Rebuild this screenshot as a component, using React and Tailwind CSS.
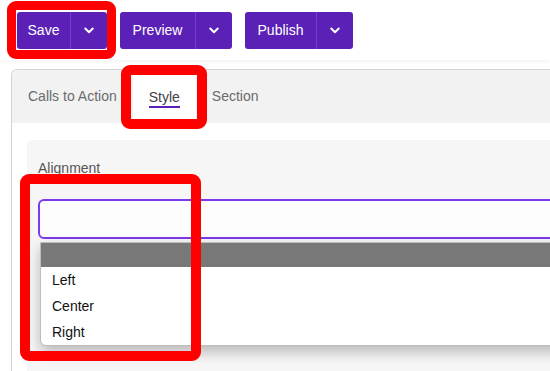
import React from 'react';

const Chevron = () => (
  <svg width="18" height="18" viewBox="0 0 24 24" fill="none" stroke="currentColor" strokeWidth="2.6" strokeLinecap="round" strokeLinejoin="round">
    <path d="M7 10l5 5 5-5" />
  </svg>
);

const SplitButton = ({ label, mainW }) => (
  <div className="flex h-[37px] rounded-[3px] bg-[#5b21b6] text-white overflow-hidden">
    <div className={`${mainW} flex items-center justify-center text-[14px]`}>{label}</div>
    <div className="w-[37px] flex items-center justify-center border-l border-[#7040d0]">
      <Chevron />
    </div>
  </div>
);

export default function App() {
  return (
    <div className="relative w-[550px] h-[371px] overflow-hidden bg-white" style={{ fontFamily: '"Liberation Sans", Arial, sans-serif' }}>
      {/* toolbar */}
      <div className="h-[60px] flex items-center pl-[17px] gap-[13px] shadow-[0_2px_4px_rgba(0,0,0,0.05)]">
        <SplitButton label="Save" mainW="w-[53px]" />
        <SplitButton label="Preview" mainW="w-[75px]" />
        <SplitButton label="Publish" mainW="w-[71px]" />
      </div>

      {/* panel */}
      <div className="ml-[11px] mt-[9px] border-l border-t border-[#d4d4d8] rounded-tl-md h-[400px]">
        <div className="flex h-[53px] bg-[#f2f2f2] rounded-tl-md text-[14px] text-[#6b6b6b]">
          <div className="px-4 flex items-center">Calls to Action</div>
          <div className="px-4 flex items-center bg-white text-[#3f3f46]">
            <span className="border-b-2 border-[#5b21b6] leading-[18px] pt-[2px]">Style</span>
          </div>
          <div className="px-4 flex items-center">Section</div>
        </div>

        <div className="pt-[17px] pl-[15px]">
          <div className="bg-[#f6f6f6] rounded-tl-md pl-[11px] pt-[19px] h-[300px]">
            <div className="text-[14px] text-[#555] leading-[18px]">Alignment</div>
            <div className="mt-[22px] h-[40px] border-2 border-[#7c3aed] rounded-md bg-[#fdfdfd] -mr-2"></div>
          </div>
        </div>
      </div>

      {/* dropdown list */}
      <div className="absolute left-[40px] top-[242px] w-[530px] h-[104px] bg-white border border-[#bdbdbd] rounded-b-md shadow-[0_6px_14px_rgba(0,0,0,0.25)] text-[14px] text-[#111]">
        <div className="h-[24px] bg-[#787878]"></div>
        <div className="pl-[11px] h-[26px] flex items-center pt-[1px]">Left</div>
        <div className="pl-[11px] h-[26px] flex items-center pt-[1px]">Center</div>
        <div className="pl-[11px] h-[26px] flex items-center pt-[1px]">Right</div>
      </div>

      {/* highlight boxes */}
      <div className="absolute left-[7px] top-[1px] w-[109px] h-[58px] border-[9px] border-[#ff0000] rounded-[9px]"></div>
      <div className="absolute left-[121px] top-[65px] w-[86px] h-[64px] border-[10px] border-[#ff0000] rounded-[9px]"></div>
      <div className="absolute left-[20px] top-[174px] w-[181px] h-[187px] border-[10px] border-[#ff0000] rounded-[9px]"></div>
    </div>
  );
}
